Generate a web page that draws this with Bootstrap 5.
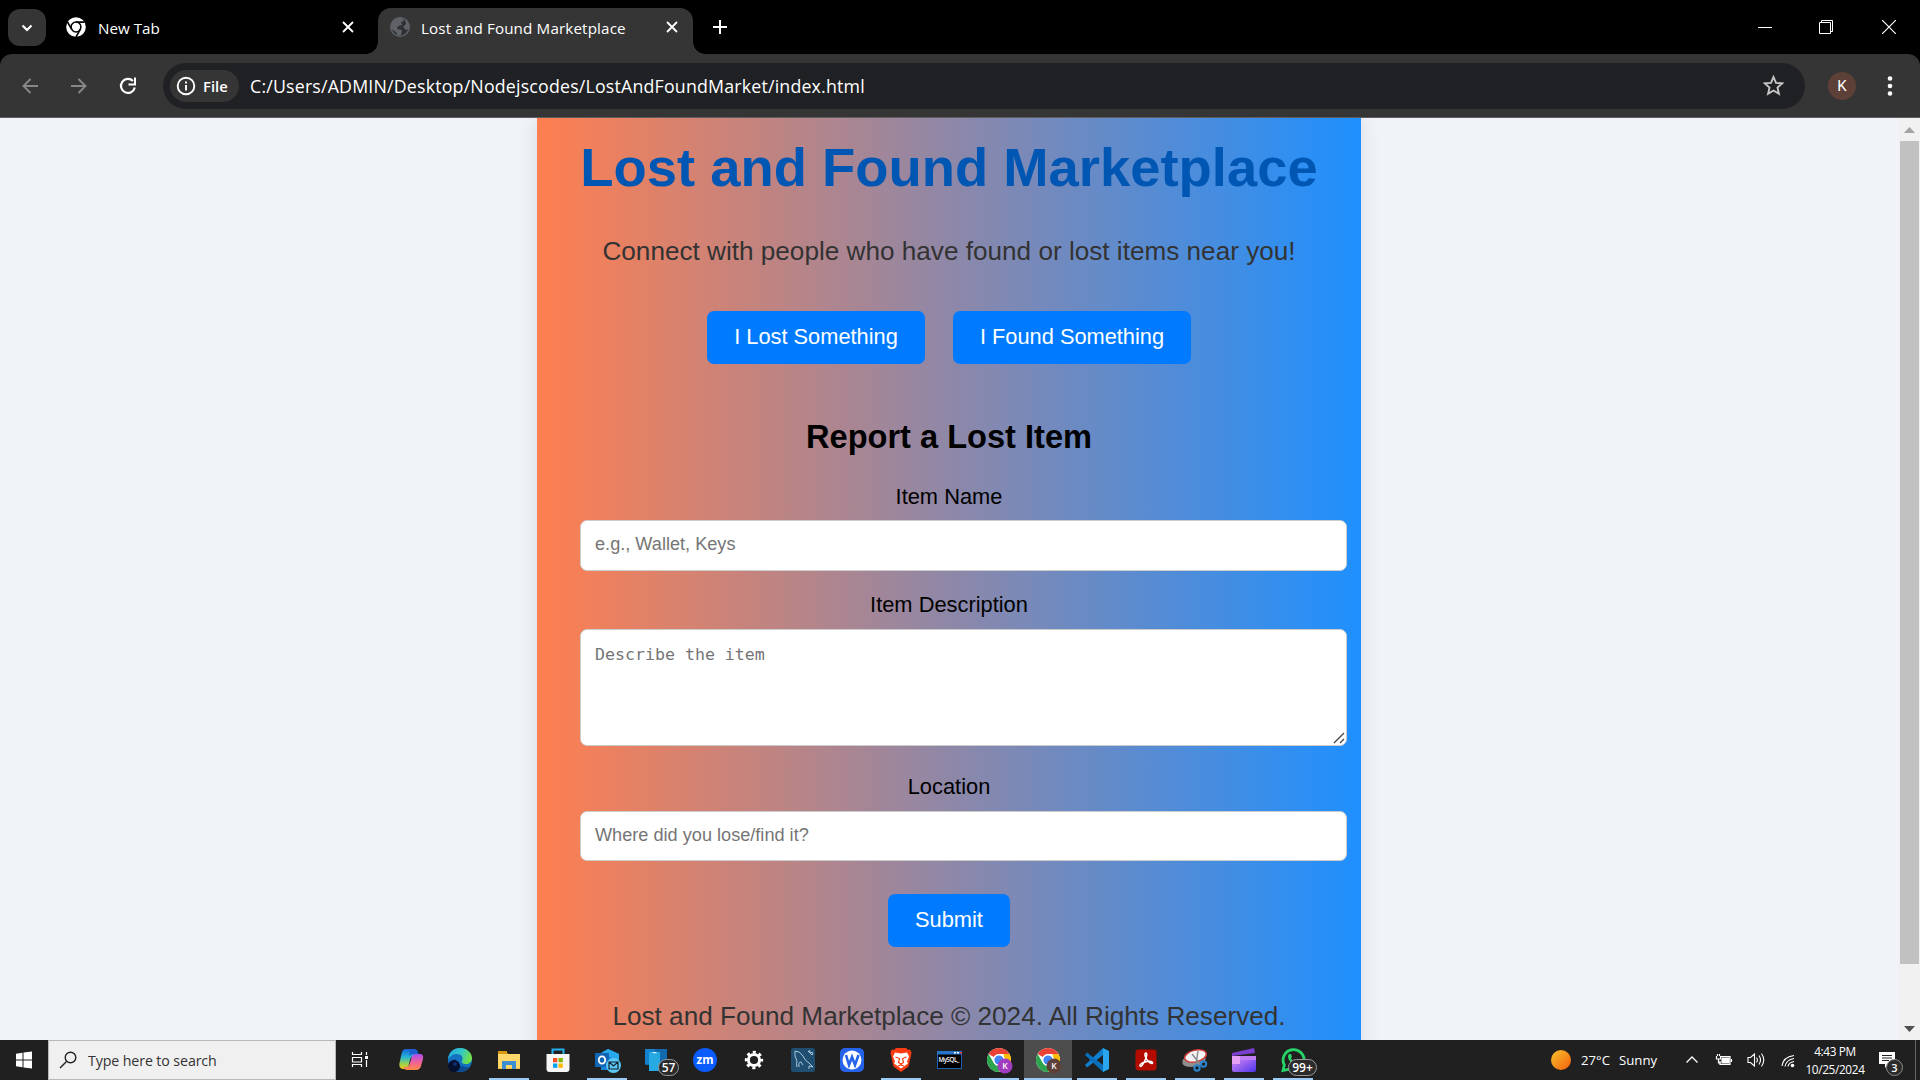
<!DOCTYPE html>
<html lang="en">
<head>
<meta charset="utf-8">
<title>Lost and Found Marketplace</title>
<link href="https://cdn.jsdelivr.net/npm/bootstrap@5.3.0/dist/css/bootstrap.min.css" rel="stylesheet">
<style>
body{width:1920px;height:1080px;overflow:hidden;background:#f0f4f8;font-family:"Open Sans","Noto Sans",sans-serif;color:#fff;font-size:15px;line-height:1}
svg{display:block;flex:none}
.ui{font-family:"Open Sans","Noto Sans",sans-serif;white-space:nowrap}
.tabstrip{height:54px;background:#000}
.tabsearch{width:38px;height:37px;margin:9px 0 0 8px;border-radius:12px;background:#353535}
.tab-idle{width:332px;height:46px;margin-top:4px;padding-left:20px}
.tab-live{width:315px;height:46px;background:#353535;border-radius:13px 13px 0 0;position:relative;padding-left:12px}
.tab-live::before,.tab-live::after{content:"";position:absolute;bottom:0;width:12px;height:12px}
.tab-live::before{left:-12px;background:radial-gradient(circle at 0 0,#000 11.5px,#353535 12px)}
.tab-live::after{right:-12px;background:radial-gradient(circle at 100% 0,#000 11.5px,#353535 12px)}
.tabtitle{font-size:15.2px;letter-spacing:.14px;padding-top:3px}
.toolzone{background:#000;height:64px}
.toolbar-row{height:64px;background:#353535;border-bottom:1px solid #5f5c60;border-radius:12px 12px 0 0}
.omni{width:1642px;height:46px;border-radius:23px;background:#202124;padding:0 19px 0 7px}
.chip{width:69px;height:32px;border-radius:16px;background:#353535;padding-left:6px}
.address{font-size:17.8px;letter-spacing:.18px;margin-left:11px;padding-top:2px}
.avatar{width:28px;height:28px;border-radius:50%;background:#5d4037;font-family:Roboto,sans-serif;font-size:15px}
.viewport{height:922px;overflow:hidden;background:#f0f4f8}
.market{width:824px;height:960px;padding:19px 44px 0;background:linear-gradient(to right,#ff7f50,#1e90ff);box-shadow:0 0 20px rgba(0,0,0,.1);font-family:"Liberation Sans",Arial,sans-serif;color:#000;text-align:center;white-space:nowrap}
.market h1{font-size:54.4px;line-height:62px;font-weight:700;color:#0056b3;margin:0 -10px 37px}
.market p{font-size:26.15px;line-height:30px;color:#333;margin:0}
.market h2{font-size:32.6px;line-height:38px;font-weight:700;margin:54px 0 27.5px}
.market label{font-size:21.85px;line-height:26px;display:block;margin-bottom:10.5px}
.cta{font-size:21.8px;height:53px;background:#007bff;color:#fff;border:0;border-radius:7px;padding:0 0 2px;line-height:1}
.field{width:767px;margin-left:-1px;border:1px solid #ccc;border-radius:7px;padding:0 14px 1px;font-size:18.15px;background:#fff;color:#757575;display:block}
.field::placeholder{color:#757575;opacity:1}
textarea.field{font-family:"DejaVu Sans Mono",monospace;font-size:16.6px;padding:14px 14px;height:117px;line-height:22px;resize:none}
.grip{position:absolute;left:752px;bottom:2px}
.scroller{width:22px;background:#f1f1f1}
.thumb{width:19px;height:823px;background:#c1c1c1;margin-left:2px}
.taskbar{height:40px;background:#202020}
.searchbox{width:288px;height:40px;background:#f0f0f0;border:1px solid #b9b9b9;color:#333;padding-left:10px}
.app{width:48px;height:40px;margin-right:1px;position:relative}
.app.on::after{content:"";position:absolute;left:4px;right:4px;bottom:0;height:2px;background:#9ccaf7}
.app.live{background:#4d4d4d}
.app.live::after{left:0;right:0}
.pill{position:absolute;top:19px;height:17px;border:1px solid #999;border-radius:9px;background:#2b2b2b;font-size:12px;font-weight:600;line-height:15px;text-align:center}
.clock{font-size:11.8px;line-height:17.500px;width:68px;text-align:center;letter-spacing:-.35px;padding-top:1px}
svg text{font-family:"Open Sans",sans-serif}
</style>
<script src="https://cdn.jsdelivr.net/npm/bootstrap@5.3.0/dist/js/bootstrap.bundle.min.js"></script>
</head>
<body class="d-flex flex-column">
<svg width="0" height="0" class="position-absolute">
<defs>
<linearGradient id="sun" x1="0" y1="0" x2="1" y2="1"><stop offset="0" stop-color="#f9c22e"/><stop offset="1" stop-color="#f2600c"/></linearGradient>
<linearGradient id="cp1" x1="0" y1="0" x2="0" y2="1"><stop offset="0" stop-color="#1566d6"/><stop offset=".4" stop-color="#27b3d6"/><stop offset=".75" stop-color="#9bd34a"/><stop offset="1" stop-color="#f7c21a"/></linearGradient>
<linearGradient id="cp2" x1="0" y1="0" x2="0" y2="1"><stop offset="0" stop-color="#a94df0"/><stop offset=".5" stop-color="#f0609b"/><stop offset="1" stop-color="#fd8b45"/></linearGradient>
<linearGradient id="edge" x1="0" y1="0" x2="1" y2=".3"><stop offset="0" stop-color="#1ea7e8"/><stop offset=".6" stop-color="#35c7c4"/><stop offset="1" stop-color="#6fe04a"/></linearGradient>
<linearGradient id="clip" x1="0" y1="0" x2="1" y2="1"><stop offset="0" stop-color="#d58cf5"/><stop offset=".5" stop-color="#9a63f0"/><stop offset="1" stop-color="#4a35e8"/></linearGradient>
<g id="chrome"><circle r="12" fill="#fff"/><path d="M0-12A12 12 0 0 1 10.4-6H0A6 6 0 0 0-5.2-3L-10.4-6A12 12 0 0 1 0-12z" fill="#ea4335"/><path d="M10.4-6A12 12 0 0 1 0 12L5.2 3A6 6 0 0 0 5.2-3L4.5-6z" fill="#fbbc04"/><path d="M-10.4-6A12 12 0 0 0 0 12L5.2 3A6 6 0 0 1-5.2 3z" fill="#2da44e"/><circle r="5.8" fill="#fff"/><circle r="4.6" fill="#4285f4"/></g>
</defs></svg>

<!-- tab strip -->
<div class="tabstrip d-flex">
  <div class="tabsearch d-flex align-items-center justify-content-center"><svg width="12" height="8" viewBox="0 0 12 8"><path d="M1.5 1.5 6 6l4.500-4.500" fill="none" stroke="#fff" stroke-width="2.200"/></svg></div>
  <div class="tab-idle d-flex align-items-center">
    <svg width="20" height="20" viewBox="-10 -10 20 20"><circle r="9.800" fill="#fff"/><circle r="4.900" fill="none" stroke="#000" stroke-width="1.500"/><path d="M0-4.900H8.500M-4.300 2.400-8.500-5M4.300 2.400 0 10" stroke="#000" stroke-width="1.600"/></svg>
    <span class="ui tabtitle" style="margin-left:12px;width:61px;letter-spacing:0">New Tab</span>
    <svg width="12" height="12" viewBox="0 0 12 12" style="margin-left:183px"><path d="M1 1 11 11M11 1 1 11" stroke="#fff" stroke-width="1.800"/></svg>
  </div>
  <div class="tab-live d-flex align-items-center" style="margin-top:8px;padding-bottom:8px">
    <svg width="20" height="20" viewBox="-10 -10 20 20"><circle r="9.300" fill="#2f3033" stroke="#5f6368" stroke-width="1.300"/><path d="M-9-2C-7-8-2-10 2-9L4-6 1-5 2-2-2-1-3 2 2 3 1 8-2 9-4 5-9 2zM5-8C9-6 10-2 9 2L6 3 3 0 6-3z" fill="#5f6368"/></svg>
    <span class="ui tabtitle" style="margin-left:11px;width:206px">Lost and Found Marketplace</span>
    <svg width="12" height="12" viewBox="0 0 12 12" style="margin-left:39px"><path d="M1 1 11 11M11 1 1 11" stroke="#fff" stroke-width="1.800"/></svg>
  </div>
  <svg width="14" height="14" viewBox="0 0 14 14" style="margin:20px 0 0 20px"><path d="M7 0V14M0 7H14" stroke="#fff" stroke-width="2"/></svg>
  <div class="d-flex ms-auto" style="padding:20px 24px 0 0;gap:47px">
    <svg width="14" height="14"><path d="M0 7.500H14" stroke="#fff"/></svg>
    <svg width="14" height="14" fill="none" stroke="#fff"><path d="M.5 2.500H11.500V13.500H.500zM2.500 2.500V.500H13.500V11.500H11.500"/></svg>
    <svg width="14" height="14" style="margin-left:2px"><path d="M0 0 14 14M14 0 0 14" stroke="#fff" stroke-width="1.200"/></svg>
  </div>
</div>

<!-- toolbar -->
<div class="toolzone">
<div class="toolbar-row d-flex align-items-center">
  <svg width="16" height="16" viewBox="0 0 16 16" style="margin-left:22px" fill="none" stroke="#87888a" stroke-width="1.900"><path d="M16 8H1.500M8.500 1 1.500 8l7 7"/></svg>
  <svg width="16" height="16" viewBox="0 0 16 16" style="margin-left:33px" fill="none" stroke="#87888a" stroke-width="1.900"><path d="M0 8H14.500M7.500 1l7 7-7 7"/></svg>
  <svg width="18" height="18" viewBox="0 0 18 18" style="margin-left:32px" fill="none" stroke="#fff" stroke-width="2.200"><path d="M15.800 10.500A7 7 0 1 1 14 4"/><path d="M16 .5V7.500H9.500" stroke-width="2"/></svg>
  <div class="omni d-flex align-items-center" style="margin-left:26px">
    <div class="chip d-flex align-items-center">
      <svg width="20" height="20" viewBox="-10 -10 20 20"><circle r="8.300" fill="none" stroke="#fff" stroke-width="1.900"/><path d="M0-1V4.500M0-4.500V-2.500" stroke="#fff" stroke-width="1.900"/></svg>
      <span class="ui fw-semibold" style="font-size:14.800px;margin-left:7px;padding-top:2px">File</span>
    </div>
    <span class="ui address">C:/Users/ADMIN/Desktop/Nodejscodes/LostAndFoundMarket/index.html</span>
    <svg class="ms-auto" style="margin-right:2px" width="21" height="21" viewBox="0 0 21 21"><path d="M10.500 2l2.500 5.900 6.200.5-4.700 4.200 1.400 6.200-5.400-3.300-5.400 3.300 1.400-6.200L1.800 8.400 8 7.900z" fill="none" stroke="#c7c7c7" stroke-width="1.900"/></svg>
  </div>
  <div class="avatar d-flex align-items-center justify-content-center" style="margin-left:23px;padding-top:1px">K</div>
  <svg width="6" height="20" viewBox="0 0 6 20" style="margin-left:31px" fill="#fff"><circle cx="3" cy="2.500" r="2.300"/><circle cx="3" cy="10" r="2.300"/><circle cx="3" cy="17.500" r="2.300"/></svg>
</div>
</div>

<!-- page -->
<div class="viewport d-flex">
  <main class="d-flex justify-content-center" style="width:1898px">
    <div class="market">
      <h1>Lost and Found Marketplace</h1>
      <p>Connect with people who have found or lost items near you!</p>
      <div class="d-flex justify-content-center" style="gap:28px;margin-top:45px">
        <button class="cta" style="width:218px">I Lost Something</button>
        <button class="cta" style="width:238px">I Found Something</button>
      </div>
      <h2>Report a Lost Item</h2>
      <form>
        <label for="nm">Item Name</label>
        <input id="nm" class="field" style="height:51px;margin-bottom:20.500px;padding-bottom:3px" placeholder="e.g., Wallet, Keys">
        <label for="ds" style="margin-bottom:11.500px">Item Description</label>
        <div class="position-relative" style="margin-bottom:27.500px">
          <textarea id="ds" class="field" placeholder="Describe the item"></textarea>
          <svg class="grip" width="12" height="12" stroke="#444" stroke-width="1.300"><path d="M1 11 11 1M7 11 11 7"/></svg>
        </div>
        <label for="lc" style="margin-bottom:11.500px">Location</label>
        <input id="lc" class="field" style="height:50px;margin-bottom:33px" placeholder="Where did you lose/find it?">
        <button type="button" class="cta d-block mx-auto" style="width:122px">Submit</button>
      </form>
      <p style="margin-top:54px">Lost and Found Marketplace © 2024. All Rights Reserved.</p>
    </div>
  </main>
  <div class="scroller d-flex flex-column">
    <svg width="22" height="23"><path d="M6 15 11.500 9 17 15z" fill="#a3a3a3"/></svg>
    <div class="thumb"></div>
    <svg class="mt-auto" width="22" height="22"><path d="M6 8H17L11.500 14z" fill="#505050"/></svg>
  </div>
</div>

<!-- taskbar -->
<div class="taskbar d-flex">
  <svg width="48" height="40" fill="#fff"><path d="M16 13.700l6.500-1V19.500H16zM23.500 12.500 32 11.500V19.500H23.500zM16 20.500h6.500v6.800l-6.500-1zM23.500 20.500H32V28.500l-8.500-1z"/></svg>
  <div class="searchbox d-flex align-items-center">
    <svg width="18" height="18" fill="none" stroke="#222" stroke-width="1.400"><circle cx="11.500" cy="6.500" r="5.300"/><path d="M7.500 10.500 1 17"/></svg>
    <span class="ui" style="font-size:14.200px;letter-spacing:-.1px;margin-left:11px;padding-top:2px">Type here to search</span>
  </div>
  <svg width="51" height="40" fill="none" stroke="#fff" stroke-width="1.200"><path d="M16.500 12v2.500h9V12M16.500 27v-2.500h9V27M16.500 17.500h9v4.500h-9zM30.500 12v3M30.500 20v7"/><path d="M29 16h3v3h-3z" fill="#fff" stroke="none"/></svg>

  <div class="app"><svg width="48" height="40"><path d="M17 9h10q3 0 4 4l1 3h-5q-3 0-4 4l-1.500 6q-1 3-4 3h-2q-4-1-3-6l2-9q1-5 4-5z" fill="url(#cp1)"/><path d="M30 14h3q4 0 3 5l-2 7q-1 4-5 4H20q-3 0-3-3h2q3 0 4-4l2-7q1-2 5-2z" fill="url(#cp2)"/><path d="M17 9h10q3 0 4 4l.5 1H26q-3 0-4 3l1-5q0-3-6-3z" fill="#1d5fd0"/></svg></div>
  <div class="app"><svg width="48" height="40"><circle cx="24" cy="20" r="12" fill="#1371c0"/><path d="M12 19C13 11 19 8 24 8c7 0 12 5 12 10 0 4-3 6-6 6-3 0-5-1-4-3 2-4-1-7-5-7-4 0-7 2-9 5z" fill="url(#edge)"/><path d="M20 19q0 8 13 8-4 5-9 5-8-1-8-8 0-4 4-5z" fill="#0c4b91"/><circle cx="18" cy="26" r="6" fill="#06102e"/><circle cx="19" cy="24" r="2" fill="#102d72"/></svg></div>
  <div class="app on"><svg width="48" height="40"><path d="M13 11h8l2 3h12v15H13z" fill="#f5c044"/><path d="M13 11h9v3h-9z" fill="#d99a10"/><path d="M13 14h22v14H13z" fill="#ffd869"/><path d="M17 29v-8h14v8h-4v-4h-6v4z" fill="#3d8ed3"/></svg></div>
  <div class="app"><svg width="48" height="40"><path d="M18.500 15V9.500h11V15" fill="none" stroke="#22b0ee" stroke-width="2"/><path d="M12.500 14h23v15q0 3-3 3h-17q-3 0-3-3z" fill="#f6f6f6"/><path d="M19 18h4.300v4.300H19z" fill="#f25022"/><path d="M24.500 18h4.300v4.300h-4.300z" fill="#7fba00"/><path d="M19 23.500h4.300v4.300H19z" fill="#00a4ef"/><path d="M24.500 23.500h4.300v4.300h-4.300z" fill="#ffb900"/></svg></div>
  <div class="app on"><svg width="48" height="40"><path d="M18 13 25 9l11 5v13l-4 3H18z" fill="#1584d8"/><path d="M18 13 25 9l11 5v7z" fill="#28a8ea"/><path d="M12 13h14v14H12z" fill="#1066b5"/><ellipse cx="19" cy="20" rx="3.200" ry="3.700" fill="none" stroke="#fff" stroke-width="1.800"/><circle cx="30.500" cy="25.500" r="7.500" fill="#5cc8f5"/><path d="M26 22h9v7h-9zM26 22l4.500 4 4.500-4" fill="none" stroke="#13232e" stroke-width="1.200"/></svg></div>
  <div class="app"><svg width="48" height="40"><path d="M13 9h22v16H13z" fill="#1269ad"/><path d="M13 9h10v15H13z" fill="#1580cc"/><path d="M17 12h11v19H17z" fill="#27a9e4"/><path d="M20.500 12h4v1.200h-4z" fill="#d9f2ff"/></svg><span class="pill" style="left:26px;width:21px">57</span></div>
  <div class="app"><svg width="48" height="40"><circle cx="24" cy="20" r="12" fill="#0b5cff"/><text x="24" y="23.500" text-anchor="middle" font-size="11.500" font-weight="700" fill="#fff">zm</text></svg></div>
  <div class="app"><svg width="48" height="40"><circle cx="24" cy="20" r="5.600" fill="none" stroke="#fff" stroke-width="3"/><circle cx="24" cy="20" r="7.900" fill="none" stroke="#fff" stroke-width="2.600" stroke-dasharray="3.100 3.105" stroke-dashoffset="1.500"/></svg></div>
  <div class="app"><svg width="48" height="40"><rect x="12" y="8" width="24" height="24" rx="2.500" fill="#1f4e70"/><path d="M18 27q-1-4 0-6-3-5-2-10 5 0 8 5 2 5 6 7l4 4-4-1v3M20 27q-1-4 1-5 1-1 3 3M30 10l1 2 3 1-1 2M29 11l4 4" fill="none" stroke="#b9d6e8" stroke-width=".9"/></svg></div>
  <div class="app"><svg width="48" height="40"><rect x="12" y="8" width="24" height="24" rx="5" fill="#2563eb"/><circle cx="24" cy="20" r="9.500" fill="#fff"/><path d="M18 15 21 25 24 17l3 8 3.500-10" fill="none" stroke="#2563eb" stroke-width="2.600"/></svg></div>
  <div class="app on"><svg width="48" height="40"><path d="M19 8h10l2 2 2-.5 1.500 3-.5 3-2.500 11L24 32l-7.500-5.500L14 15.500l-.5-3 1.500-3 2 .5z" fill="#fb3c12"/><path d="M18 12.500l6 1 6-1 2 4-2 5 1 2-7 5-7-5 1-2-2-5z" fill="#fff"/><path d="M18.500 17l4 1.500-1 4 2.500 1.500 2.500-1.500-1-4 4-1.500M21 26l3-1 3 1" fill="none" stroke="#fb3c12" stroke-width="1.200"/></svg></div>
  <div class="app"><svg width="48" height="40"><rect x="11.500" y="11.500" width="24" height="17" fill="#000" stroke="#1d62b5"/><path d="M11 11h25v3.500H11z" fill="#2673c9"/><path d="M28 12h2v1.500h-2zM31 12h2v1.500h-2z" fill="#fff"/><path d="M34 12h2v1.500h-2z" fill="#e33"/><text x="12.500" y="21.500" font-size="6.200" font-weight="600" fill="#fff" textLength="21">MySQL_</text></svg></div>
  <div class="app on"><svg width="48" height="40"><use href="#chrome" x="24" y="20"/><circle cx="30" cy="26" r="7.500" fill="#a03cbd"/><text x="30" y="29" text-anchor="middle" font-size="8.500" font-weight="600" fill="#fff">K</text></svg></div>
  <div class="app on live"><svg width="48" height="40"><use href="#chrome" x="24" y="20"/><circle cx="30" cy="26" r="7.500" fill="#5d4037"/><text x="30" y="29" text-anchor="middle" font-size="8.500" font-weight="600" fill="#fff">K</text></svg></div>
  <div class="app on"><svg width="48" height="40"><path d="M30 8l6 3v18l-6 3z" fill="#2aa6f0"/><path d="M30 8v7L14 27.500l-2-2.500z" fill="#1180cf"/><path d="M30 32v-7L14 12.500 12 15z" fill="#0a6fba"/></svg></div>
  <div class="app on"><svg width="48" height="40"><rect x="13.500" y="9.500" width="21" height="21" rx="3" fill="#b30b00"/><path d="M18 26q-1-2 5-4 6-1.500 7.500.5.500 2-3 0-3.500-2.500-4.500-7-.3-2.500 1-2.500 1.500.500 0 5-2 5-4 7.500-1.500 1.500-2 .5z" fill="none" stroke="#fff" stroke-width="1.500"/></svg></div>
  <div class="app on"><svg width="48" height="40"><ellipse cx="23" cy="20" rx="12" ry="6.500" transform="rotate(-14 23 20)" fill="#8f8f8f"/><ellipse cx="24.500" cy="16" rx="11" ry="5.800" transform="rotate(-14 24.500 16)" fill="#f4f4f4" stroke="#d13c3c" stroke-width="1.500"/><path d="M21 14l8 10M27 11l-2 14" stroke="#888" stroke-width="1.400"/><g fill="none" stroke="#2c85cf" stroke-width="2"><circle cx="26" cy="28" r="2.700"/><circle cx="32.500" cy="24" r="2.700"/></g></svg></div>
  <div class="app on"><svg width="48" height="40"><path d="M12 16h24v14q0 2-2 2H14q-2 0-2-2z" fill="url(#clip)"/><path d="M12 16h24v4H12z" fill="#c07cf2"/><path d="M12 16h8v8h-8z" fill="#e5a0f6"/><path d="M12 13 34 8l1 5-23 3z" fill="#7a3fd0"/></svg></div>
  <div class="app on"><svg width="48" height="40"><path d="M14 30.500l1.300-5.500a10.500 10.500 0 1 1 4.200 4.300z" fill="none" stroke="#25d366" stroke-width="2.800"/><path d="M20 14q-2 2 0 6 3 5 8 6l2-3-3-2-2 1q-2-1-3-4l1-1-1-3z" fill="#25d366"/></svg><span class="pill" style="left:19px;width:29px">99+</span></div>

  <div class="d-flex align-items-center ms-auto ui">
    <svg width="20" height="20"><circle cx="10" cy="10" r="10" fill="url(#sun)"/></svg>
    <span style="font-size:13.200px;margin-left:10px;width:38px;padding-top:2px">27°C</span>
    <span style="font-size:13.200px;width:38px;padding-top:2px">Sunny</span>
    <svg width="14" height="10" style="margin-left:28px"><path d="M1.500 7.500 7 2l5.500 5.500" fill="none" stroke="#fff" stroke-width="1.300"/></svg>
    <svg width="18" height="14" style="margin-left:16px" fill="none" stroke="#fff" stroke-width="1.200"><path d="M5 3.500h10v8H5V8M1.500 3v3h4V3M2.500 3V1M4.500 3V1M3.500 6v4H6M16.500 6v3"/><path d="M7 5h7v5H7z" fill="#fff"/></svg>
    <svg width="18" height="16" style="margin-left:14px" fill="none" stroke="#fff" stroke-width="1.100"><path d="M1 5.500h2.500l4-3.500v12l-4-3.500H1zM9.500 5.500q1.800 2.500 0 5M12 3.500q3 4.500 0 9M14.500 1.500q4.500 6.500 0 13"/></svg>
    <svg width="15" height="15" style="margin-left:16px" fill="none" stroke="#fff" stroke-width="1.100"><path d="M1 13Q2 4 13 2.500M4 13.500Q5 7 13 5.500M7 13.500Q7.500 9.500 13 8.500"/><circle cx="11.500" cy="12.500" r="1.800" fill="#fff" stroke="none"/></svg>
    <div class="clock" style="margin-left:5px">4:43 PM<br>10/25/2024</div>
    <div class="position-relative" style="margin-left:9px"><svg width="37" height="40"><path d="M1 12h16v12h-6l-4 4v-4H1z" fill="#fff"/><path d="M4 15.500h10M4 18h10M4 20.500h7" stroke="#202020"/><circle cx="16.500" cy="27.500" r="8" fill="#2b2b2b" stroke="#8b8b8b"/><text x="16.500" y="31.500" text-anchor="middle" font-size="11" font-weight="600" fill="#fff">3</text></svg></div>
    <div style="width:1px;height:40px;background:#666;margin-right:4px"></div>
  </div>
</div>
</body>
</html>
